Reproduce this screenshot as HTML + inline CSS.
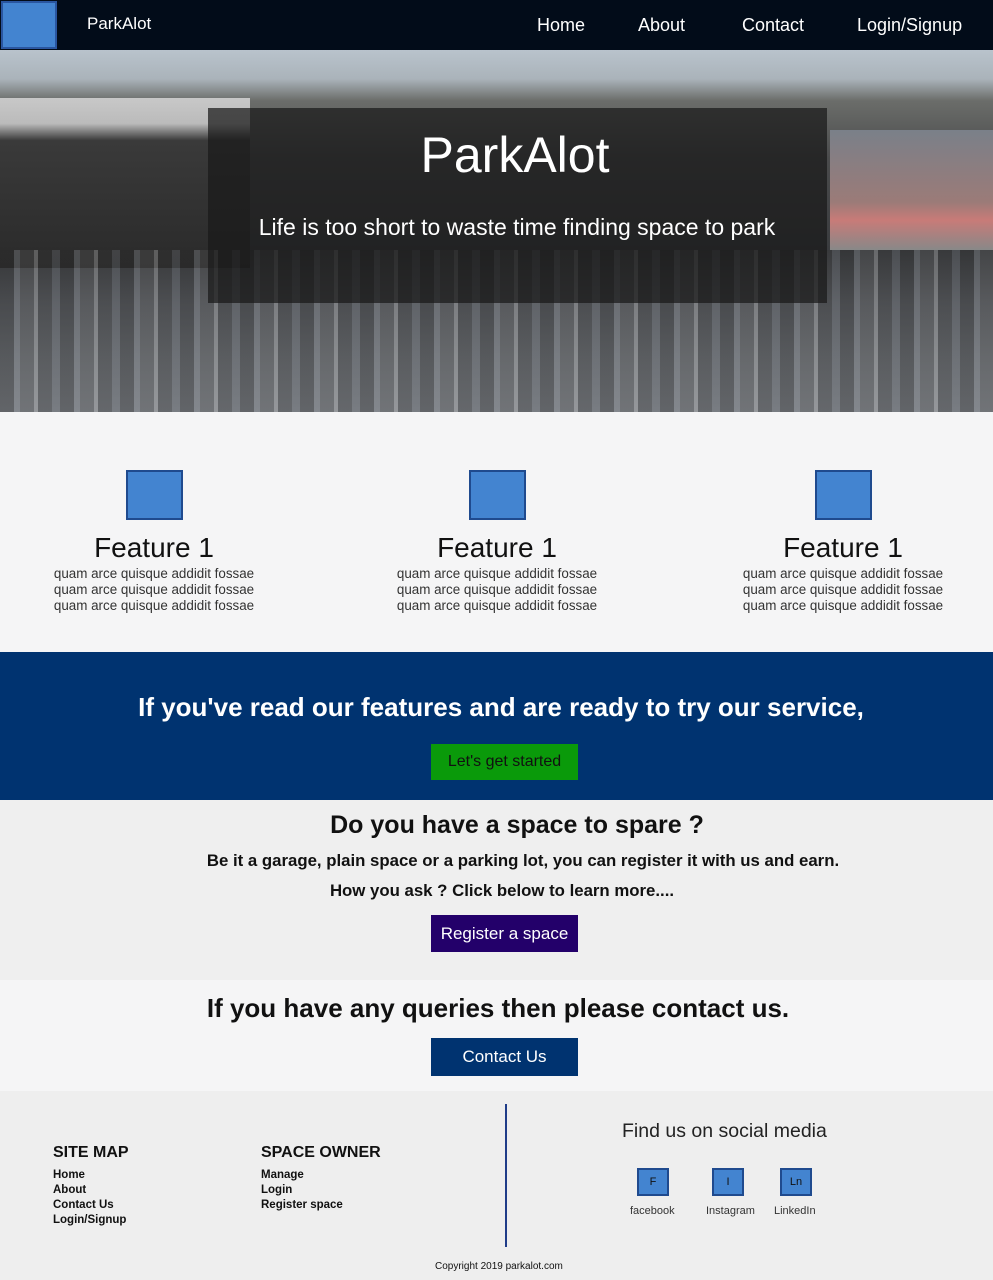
<!DOCTYPE html>
<html><head><style>
*{margin:0;padding:0;box-sizing:border-box}
body{width:993px;height:1280px;font-family:"Liberation Sans",sans-serif;background:#f5f5f6;position:relative;overflow:hidden}
.abs{position:absolute}
nav{position:absolute;left:0;top:0;width:993px;height:50px;background:#020c19}
nav .logo{position:absolute;left:1px;top:1px;width:56px;height:48px;background:#4384d0;border:2px solid #2a56a0}
nav a{position:absolute;top:15px;color:#fff;font-size:18px;text-decoration:none}
.hero{position:absolute;left:0;top:50px;width:993px;height:362px;
background:linear-gradient(180deg,#b9c3cc 0,#aab3ba 8%,#6b6d6a 14%,#4a4b4c 30%,#3a3c3f 55%,#5a5d62 70%,#6f7378 85%,#80848a 100%)}
.hero .b1{position:absolute;left:0;top:48px;width:250px;height:170px;background:linear-gradient(180deg,#c8c8c8 0,#bbb 15%,#3a3a3a 25%,#2a2a2a 100%)}
.hero .b2{position:absolute;left:830px;top:80px;width:163px;height:120px;background:linear-gradient(180deg,#7a8089,#9b7b78 60%,#c87b78 75%,#888 100%)}
.hero .cars{position:absolute;left:0;top:200px;width:993px;height:162px;
background:repeating-linear-gradient(90deg,#2a2a2a 0 14px,#8a8e94 14px 20px,#555 20px 34px,#bbb 34px 38px,#333 38px 52px,#6a6e74 52px 60px);opacity:.35}
.hero .ov{position:absolute;left:208px;top:58px;width:619px;height:195px;background:rgba(25,25,25,.72)}
.hero h1{position:absolute;left:0;width:1030px;top:76px;text-align:center;color:#fff;font-weight:normal;font-size:50px}
.hero p{position:absolute;left:0;width:1034px;top:164px;text-align:center;color:#fff;font-size:23px}
.feat{position:absolute;top:470px;width:260px;text-align:center}
.feat .ic{width:57px;height:50px;background:#4384d0;border:2px solid #1f4a8e;margin:0 auto}
.feat h3{font-weight:normal;font-size:28px;margin-top:12px;color:#111}
.feat p{font-size:13.4px;line-height:16px;color:#333;margin-top:2px}
.cta{position:absolute;left:0;top:652px;width:993px;height:148px;background:#003370}
.cta h2{position:absolute;top:40px;width:1002px;text-align:center;color:#fff;font-size:26px}
.btn{position:absolute;text-align:center}
.spare{position:absolute;left:0;top:800px;width:993px;height:180px;background:#efefef}
.foot{position:absolute;left:0;top:1091px;width:993px;height:189px;background:#eeeeee}
.foot .h{position:absolute;font-weight:bold;font-size:16px;color:#111}
.foot .l{position:absolute;font-size:11.5px;line-height:15px;font-weight:bold;color:#111}
.si{position:absolute;top:77px;width:32px;height:28px;background:#4384d0;border:2px solid #1f4a8e;font-size:11px;text-align:center;line-height:24px;color:#111}
.sl{position:absolute;top:114px;font-size:11px;color:#333}
</style></head><body>
<nav><div class="logo"></div>
<a style="left:87px;font-size:17px;top:14px">ParkAlot</a>
<a style="left:537px">Home</a><a style="left:638px">About</a><a style="left:742px">Contact</a><a style="left:857px">Login/Signup</a></nav>
<div class="hero"><div class="b1"></div><div class="b2"></div><div class="cars"></div><div class="ov"></div>
<h1>ParkAlot</h1><p>Life is too short to waste time finding space to park</p></div>

<div class="feat" style="left:24px"><div class="ic"></div><h3>Feature 1</h3><p>quam arce quisque addidit fossae<br>quam arce quisque addidit fossae<br>quam arce quisque addidit fossae</p></div>
<div class="feat" style="left:367px"><div class="ic"></div><h3>Feature 1</h3><p>quam arce quisque addidit fossae<br>quam arce quisque addidit fossae<br>quam arce quisque addidit fossae</p></div>
<div class="feat" style="left:713px"><div class="ic"></div><h3>Feature 1</h3><p>quam arce quisque addidit fossae<br>quam arce quisque addidit fossae<br>quam arce quisque addidit fossae</p></div>

<div class="cta"><h2>If you've read our features and are ready to try our service,</h2>
<div class="btn" style="left:431px;top:92px;width:147px;height:36px;background:#0a9a0a;color:#111;font-size:16px;line-height:36px">Let's get started</div></div>

<div class="spare">
<div class="abs" style="top:11px;width:1034px;text-align:center;font-size:25px;font-weight:bold;color:#111">Do you have a space to spare ?</div>
<div class="abs" style="top:51px;width:1046px;text-align:center;font-size:16.8px;font-weight:bold;color:#111">Be it a garage, plain space or a parking lot, you can register it with us and earn.</div>
<div class="abs" style="top:81px;width:1004px;text-align:center;font-size:16.8px;font-weight:bold;color:#111">How you ask ? Click below to learn more....</div>
<div class="btn" style="left:431px;top:115px;width:147px;height:37px;background:#23006a;color:#fff;font-size:17px;line-height:37px">Register a space</div></div>

<div class="abs" style="top:993px;width:996px;text-align:center;font-size:26px;font-weight:bold;color:#111">If you have any queries then please contact us.</div>
<div class="btn" style="left:431px;top:1038px;width:147px;height:38px;background:#003370;color:#fff;font-size:17px;line-height:38px">Contact Us</div>

<div class="foot">
<div class="h" style="left:53px;top:53px">SITE MAP</div>
<div class="l" style="left:53px;top:77px">Home<br>About<br>Contact Us<br>Login/Signup</div>
<div class="h" style="left:261px;top:53px">SPACE OWNER</div>
<div class="l" style="left:261px;top:77px">Manage<br>Login<br>Register space</div>
<div class="abs" style="left:505px;top:13px;width:2px;height:143px;background:#1f3c88"></div>
<div class="abs" style="left:622px;top:29px;font-size:19.5px;color:#222">Find us on social media</div>
<div class="si" style="left:637px">F</div><div class="si" style="left:712px">I</div><div class="si" style="left:780px">Ln</div>
<div class="sl" style="left:630px">facebook</div><div class="sl" style="left:706px">Instagram</div><div class="sl" style="left:774px">LinkedIn</div>
<div class="abs" style="left:435px;top:170px;font-size:10px;color:#111">Copyright 2019 parkalot.com</div>
</div>
</body></html>
